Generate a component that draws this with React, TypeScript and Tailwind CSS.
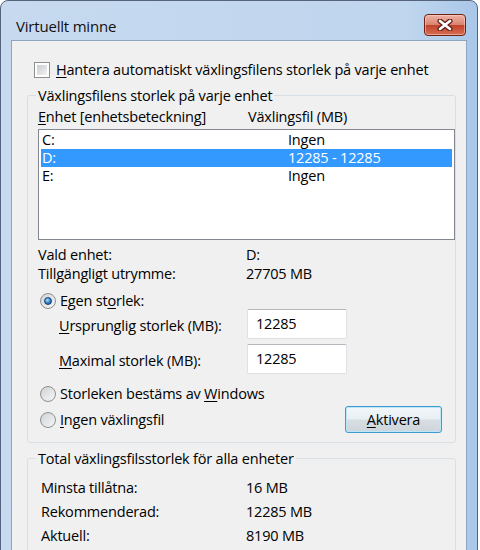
import type { ReactNode } from "react";

function U({ children }: { children: ReactNode }) {
  return <span className="underline decoration-1 underline-offset-[2px]">{children}</span>;
}

function Radio({ checked }: { checked?: boolean }) {
  return (
    <div className="w-[16px] h-[16px] shrink-0 rounded-full border border-[#8e8f8f] bg-[linear-gradient(135deg,#cfd2d6,#f6f6f6)] flex items-center justify-center">
      {checked && (
        <div className="w-[8px] h-[8px] rounded-full border border-[#17406e] bg-[radial-gradient(circle_at_40%_35%,#a8e4ff,#2a7cc9_55%,#0e4a8c)]" />
      )}
    </div>
  );
}

function Input({ value }: { value: string }) {
  return (
    <div className="w-[100px] h-[30px] rounded-[2px] border border-[#dde0e4] border-t-[#b3b6bb] bg-white pl-[8px] pt-[4px]">
      {value}
    </div>
  );
}

const drives = [
  { id: "C:", size: "Ingen" },
  { id: "D:", size: "12285 - 12285", selected: true },
  { id: "E:", size: "Ingen" },
];

export default function App() {
  return (
    <div className="w-[480px] h-[550px] overflow-hidden bg-white font-['Open_Sans',sans-serif] text-[14.5px] tracking-[-0.2px] leading-[19px] text-black">
      <div className="w-[478px] h-[600px] rounded-t-[8px] border border-[#55647a] bg-[linear-gradient(90deg,#c6d9ef,#c0d6ee_85%,#a9c7e9)] px-[10px] flex flex-col">
        {/* title bar */}
        <div className="h-[39px] shrink-0 flex items-start justify-between">
          <span className="ml-[5px] mt-[16px] text-[15px] text-[#111]">Virtuellt minne</span>
          <div className="mt-[13px] mr-[1px] w-[42px] h-[22px] rounded-[4px] border border-[#6e2216] bg-[linear-gradient(#eeb3a5,#d98471_48%,#c3432c_52%,#d66d52)] shadow-[inset_0_0_0_1px_rgba(255,220,210,0.5)] flex items-center justify-center">
            <svg width="16" height="12" viewBox="0 0 16 12">
              <path d="M3 2 L13 10 M13 2 L3 10" stroke="#5c1a10" strokeWidth="5" strokeLinecap="round" />
              <path d="M3 2 L13 10 M13 2 L3 10" stroke="#ffffff" strokeWidth="2.8" strokeLinecap="round" />
            </svg>
          </div>
        </div>

        {/* client area */}
        <div className="flex-1 border border-[#8ea4c2] bg-[#f0f0f0] flex flex-col">
          <div className="mt-[19px] h-[19px] pl-[22px] flex items-center">
            <div className="w-[16px] h-[16px] border border-[#8e8f8f] bg-white p-[2px]">
              <div className="w-full h-full bg-[linear-gradient(135deg,#c8ccd2,#f2f2f2)]" />
            </div>
            <span className="ml-[6px]">
              <U>H</U>antera automatiskt växlingsfilens storlek på varje enhet
            </span>
          </div>

          <fieldset className="mt-[7px] ml-[15px] mr-[10px] border border-[#d5dfe5] rounded-[3px] pl-[10px] pb-[9px]">
            <legend className="ml-[-2px] px-[2px]">Växlingsfilens storlek på varje enhet</legend>
            <div className="mt-[2px] h-[19px] flex">
              <span className="w-[210px]">
                <U>E</U>nhet [enhetsbeteckning]
              </span>
              <span>Växlingsfil (MB)</span>
            </div>
            <div className="mt-[3px] h-[111px] border border-[#828790] bg-white px-[2px] pt-[1px]">
              {drives.map((d) => (
                <div
                  key={d.id}
                  className={
                    "h-[18px] leading-[18px] pl-[1px] flex items-center " +
                    (d.selected ? "bg-[#3399ff] text-white" : "")
                  }
                >
                  <span className="w-[246px]">{d.id}</span>
                  <span>{d.size}</span>
                </div>
              ))}
            </div>

            <div className="mt-[5px] h-[19px] flex">
              <span className="w-[208px]">Vald enhet:</span>
              <span>D:</span>
            </div>
            <div className="h-[19px] flex">
              <span className="w-[208px]">Tillgängligt utrymme:</span>
              <span>27705 MB</span>
            </div>

            <div className="mt-[9px] h-[17px] leading-[17px] pl-[2px] flex items-center gap-[4px]">
              <Radio checked />
              <span>
                Egen st<U>o</U>rlek:
              </span>
            </div>
            <div className="h-[30px] flex items-center">
              <span className="pl-[21px] w-[209px] pt-[3px]">
                <U>U</U>rsprunglig storlek (MB):
              </span>
              <Input value="12285" />
            </div>
            <div className="mt-[5px] h-[30px] flex items-center">
              <span className="pl-[21px] w-[209px] pt-[3px]">
                <U>M</U>aximal storlek (MB):
              </span>
              <Input value="12285" />
            </div>

            <div className="mt-[10px] h-[19px] pl-[2px] flex items-center gap-[4px]">
              <Radio />
              <span>
                Storleken bestäms av <U>W</U>indows
              </span>
            </div>
            <div className="mt-[3px] h-[27px] pl-[2px] flex items-center">
              <Radio />
              <span className="ml-[4px]">
                <U>I</U>ngen växlingsfil
              </span>
              <div className="ml-auto mr-[13px] w-[97px] h-[27px] rounded-[3px] border border-[#3d9bd0] bg-[linear-gradient(#f2f7fa,#e8eef2_48%,#d8dfe3_52%,#cdd5da)] shadow-[inset_0_0_0_1px_#bde6f8] flex items-center justify-center">
                <span>
                  <U>A</U>ktivera
                </span>
              </div>
            </div>
          </fieldset>

          <fieldset className="mt-[6px] ml-[15px] mr-[10px] border border-[#d5dfe5] rounded-[3px] pl-[13px] pb-[9px]">
            <legend className="ml-[-5px] px-[2px]">Total växlingsfilsstorlek för alla enheter</legend>
            <div className="mt-[7px] h-[24px] flex items-center">
              <span className="w-[205px]">Minsta tillåtna:</span>
              <span>16 MB</span>
            </div>
            <div className="h-[24px] flex items-center">
              <span className="w-[205px]">Rekommenderad:</span>
              <span>12285 MB</span>
            </div>
            <div className="h-[24px] flex items-center">
              <span className="w-[205px]">Aktuell:</span>
              <span>8190 MB</span>
            </div>
          </fieldset>
        </div>
      </div>
    </div>
  );
}
